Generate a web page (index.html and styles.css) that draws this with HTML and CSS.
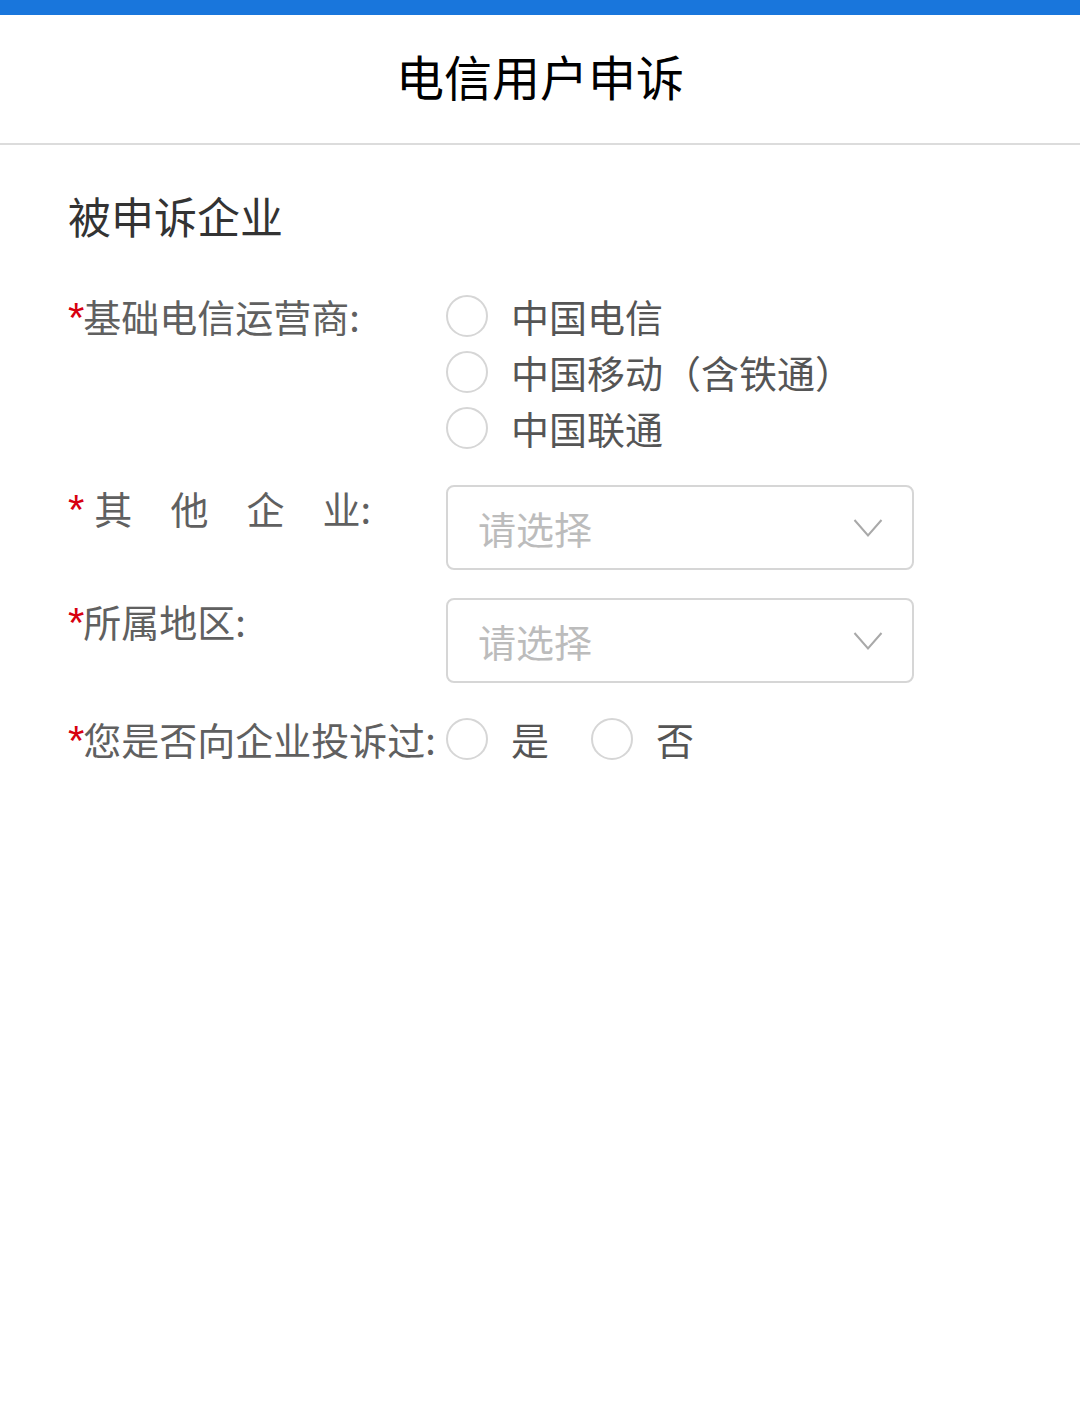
FILE: index.html
```html
<!DOCTYPE html>
<html lang="zh-CN">
<head>
<meta charset="utf-8">
<title>电信用户申诉</title>
<link rel="stylesheet" href="styles.css">
</head>
<body>
<div class="topbar"></div>
<header class="header">
  <h1 class="title">电信用户申诉</h1>
</header>
<main class="main">
  <h2 class="section-title">被申诉企业</h2>

  <div class="form-row">
    <div class="label"><span class="req">*</span>基础电信运营商:</div>
    <div class="control radio-col">
      <label class="radio-item"><span class="radio"></span><span class="opt">中国电信</span></label>
      <label class="radio-item"><span class="radio"></span><span class="opt">中国移动（含铁通）</span></label>
      <label class="radio-item"><span class="radio"></span><span class="opt">中国联通</span></label>
    </div>
  </div>

  <div class="form-row">
    <div class="label label-select"><span class="req">*</span><span class="spaced"><span class="sp">其</span><span class="sp">他</span><span class="sp">企</span>业</span>:</div>
    <div class="control">
      <div class="select">
        <span class="placeholder">请选择</span>
        <svg class="chevron" width="30" height="20" viewBox="0 0 30 20"><path d="M1.5 2 L15 17.5 L28.5 2" fill="none" stroke="#a9a9a9" stroke-width="2"/></svg>
      </div>
    </div>
  </div>

  <div class="form-row">
    <div class="label label-select"><span class="req">*</span>所属地区:</div>
    <div class="control">
      <div class="select">
        <span class="placeholder">请选择</span>
        <svg class="chevron" width="30" height="20" viewBox="0 0 30 20"><path d="M1.5 2 L15 17.5 L28.5 2" fill="none" stroke="#a9a9a9" stroke-width="2"/></svg>
      </div>
    </div>
  </div>

  <div class="form-row">
    <div class="label"><span class="req">*</span>您是否向企业投诉过:</div>
    <div class="control radio-row">
      <label class="radio-item"><span class="radio"></span><span class="opt">是</span></label>
      <label class="radio-item"><span class="radio"></span><span class="opt">否</span></label>
    </div>
  </div>
</main>
</body>
</html>
```
FILE: styles.css
```css
* {
  box-sizing: border-box;
}

html, body {
  margin: 0;
  padding: 0;
  background: #ffffff;
}

body {
  font-family: "Noto Sans CJK SC", "Noto Sans", sans-serif;
  color: #333;
}

.topbar {
  height: 15px;
  background: #1976dc;
}

.header {
  height: 130px;
  display: flex;
  align-items: center;
  justify-content: center;
  padding-bottom: 8px;
  border-bottom: 2px solid #dcdcdc;
}

.title {
  margin: 0;
  font-size: 48px;
  font-weight: 400;
  line-height: 60px;
  color: #000;
}

.main {
  padding: 40px 68px 0 68px;
}

.section-title {
  margin: 0 0 43px 0;
  font-size: 43px;
  font-weight: 400;
  line-height: 60px;
  color: #333;
}

.form-row {
  display: flex;
  align-items: flex-start;
  margin-bottom: 28px;
}

.label {
  flex: none;
  width: 378px;
  font-size: 38px;
  line-height: 52px;
  padding-top: 2px;
  color: #606060;
  white-space: nowrap;
}

.label-select {
  line-height: 46px;
  padding-top: 0;
}

.req {
  font-family: "Liberation Sans", Arial, sans-serif;
  color: #d7000f;
  font-size: 42px;
  letter-spacing: -1px;
}

.spaced {
  margin-left: 11px;
}

.sp {
  margin-right: 38px;
}

.control {
  flex: none;
  width: 468px;
}

.radio-col {
  display: flex;
  flex-direction: column;
  padding-bottom: 1px;
}

.radio-row {
  display: flex;
  align-items: center;
  gap: 42px;
}

.radio-item {
  display: flex;
  align-items: center;
  height: 56px;
}

.radio {
  flex: none;
  width: 42px;
  height: 42px;
  border: 2px solid #d6d6d6;
  border-radius: 50%;
  background: #fff;
  margin-right: 23px;
}

.opt {
  font-size: 38px;
  line-height: 56px;
  color: #555;
  white-space: nowrap;
}

.select {
  height: 85px;
  border: 2px solid #d6d6d6;
  border-radius: 8px;
  display: flex;
  align-items: center;
  justify-content: space-between;
  padding: 0 29px 0 30px;
}

.placeholder {
  font-size: 38px;
  color: #bcbcbc;
}

.chevron {
  display: block;
}
```
